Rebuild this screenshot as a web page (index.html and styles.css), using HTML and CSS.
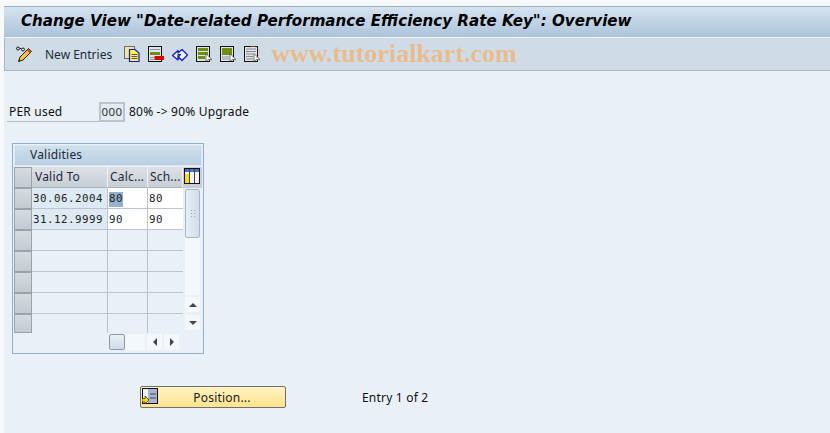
FILE: index.html
```html
<!DOCTYPE html>
<html lang="en">
<head>
  <meta charset="UTF-8" />
  <title>Change View</title>
  <link rel="stylesheet" href="styles.css">
</head>
<body>
  <div class="ventana">
    <!-- Titulo -->
    <h1 class="titulo">Change View "Date-related Performance Efficiency Rate Key": Overview</h1>

    <!-- Barra de herramientas -->
    <div class="toolbar">
      <svg class="icono" viewBox="0 0 16 16">
        <path d="M.5 2.500a1.500 1.500 0 1 1 3 0a1.500 1.500 0 1 1-3 0M3.500 2l2 1M5.500 3.500a1.500 1.500 0 1 1 3 0a1.500 1.500 0 1 1-3 0" fill="none" stroke="#222"/>
        <path d="M12.500 2.500l3 3L7 14l-4.500 1.500L4 11z" fill="#f6c33c" stroke="#222"/>
        <path d="M11.500 3.500l3 3" stroke="#d8432a" stroke-width="2"/>
        <path d="M2.500 15.500l.7-2 1.300 1.300z" fill="#111"/>
      </svg>
      <span class="toolbar-texto">New Entries</span>
      <div class="iconos">
        <svg class="icono" viewBox="0 0 16 16">
          <rect x=".5" y=".5" width="10" height="12" fill="#f1e6a0" stroke="#6b6b6b"/>
          <path d="M5.500 3.500h5.500l4 3.500v8.500H5.500z" fill="#ffee55" stroke="#1018c8" stroke-width="1.200"/>
          <path d="M7.500 8.500h6M7.500 10.500h6M7.500 12.500h6" stroke="#555"/>
        </svg>
        <svg class="icono" viewBox="0 0 16 16">
          <rect x=".5" y=".5" width="13" height="15" fill="#dfe5ea" stroke="#111"/>
          <path d="M2 3.500h10M2 11.500h4M2 13.500h4" stroke="#8896a4"/>
          <rect x="2" y="6" width="10" height="3" fill="#6f8f10"/>
          <rect x="6.500" y="10" width="9.500" height="4" fill="#e00000"/>
        </svg>
        <svg class="icono" viewBox="0 0 16 16">
          <path d="M.5 9.500L6 4.500v2.500l4-3.500 5.500 5.500-5.500 5.500-3.500-3.500L8.500 8.500 6 8.500v5.500z" fill="#eef3fb" stroke="#1018c8" stroke-width="1.200" stroke-linejoin="round"/>
        </svg>
        <svg class="icono" viewBox="0 0 16 16">
          <rect x=".5" y=".5" width="13" height="15" fill="#dfe5ea" stroke="#111"/>
          <path d="M2 2h10v3H2zM2 6h10v3H2zM2 10h7v3H2z" fill="#6f8f10"/>
          <path d="M10 7.500v8l2.200-1.800 3.800 0z" fill="#fff" stroke="#222" stroke-width=".6"/>
        </svg>
        <svg class="icono" viewBox="0 0 16 16">
          <rect x=".5" y=".5" width="13" height="15" fill="#dfe5ea" stroke="#111"/>
          <rect x="2" y="2" width="10" height="7" fill="#6f8f10"/>
          <path d="M2 11h7M2 13h7" stroke="#8896a4"/>
          <path d="M10 7.500v8l2.200-1.800 3.800 0z" fill="#fff" stroke="#222" stroke-width=".6"/>
        </svg>
        <svg class="icono" viewBox="0 0 16 16">
          <rect x=".5" y=".5" width="13" height="15" fill="#dfe5ea" stroke="#111"/>
          <path d="M2 3h10M2 5.500h10M2 8h7M2 10.500h7M2 13h7" stroke="#7d8a96" stroke-width="1.200"/>
          <path d="M10 7.500v8l2.200-1.800 3.800 0z" fill="#fff" stroke="#222" stroke-width=".6"/>
          <circle cx="9.500" cy="6.500" r="6" fill="none" stroke="#e9a868" stroke-dasharray="1.500 1" opacity=".7"/>
        </svg>
      </div>
      <span class="marca">www.tutorialkart.com</span>
    </div>

    <div class="contenido">
      <!-- Campo PER -->
      <div class="fila-per">
        <label class="per-label">PER used</label>
        <span class="per-valor">000</span>
        <span class="per-texto">80% -&gt; 90% Upgrade</span>
      </div>

      <!-- Tabla -->
      <div class="tabla">
        <div class="tabla-titulo">Validities</div>
        <div class="tabla-cuerpo">
          <div class="rejilla">
            <div class="cab-sel"></div>
            <div class="cab">Valid To</div>
            <div class="cab cab-corta">Calc...</div>
            <div class="cab cab-corta">Sch...</div>

            <div class="sel"></div>
            <div class="celda clave">30.06.2004</div>
            <div class="celda editable"><span class="marcado">80</span></div>
            <div class="celda editable">80</div>

            <div class="sel"></div>
            <div class="celda clave">31.12.9999</div>
            <div class="celda editable">90</div>
            <div class="celda editable">90</div>

            <div class="sel"></div><div class="celda"></div><div class="celda"></div><div class="celda"></div>
            <div class="sel"></div><div class="celda"></div><div class="celda"></div><div class="celda"></div>
            <div class="sel"></div><div class="celda"></div><div class="celda"></div><div class="celda"></div>
            <div class="sel"></div><div class="celda"></div><div class="celda"></div><div class="celda"></div>
            <div class="sel ultima"></div><div class="celda ultima"></div><div class="celda ultima"></div><div class="celda ultima"></div>
          </div>

          <!-- Scroll vertical -->
          <div class="scroll-v">
            <div class="config">
              <svg viewBox="0 0 16 16" width="16" height="16">
                <rect x=".5" y=".5" width="15" height="15" fill="#f4f6fa" stroke="#111"/>
                <rect x="1" y="1" width="14" height="3" fill="#4a70b8"/>
                <rect x="1" y="6" width="4" height="9" fill="#ffe000"/>
                <path d="M5.500 1v14M10.500 1v14" stroke="#444"/>
              </svg>
            </div>
            <div class="pista-v">
              <div class="pulgar-v"><span class="agarre"></span></div>
            </div>
            <div class="boton-v"><span class="flecha-arriba"></span></div>
            <div class="boton-v abajo"><span class="flecha-abajo"></span></div>
          </div>
        </div>

        <!-- Scroll horizontal -->
        <div class="scroll-h">
          <div class="pista-h"><div class="pulgar-h"></div></div>
          <div class="boton-h"><span class="flecha-izq"></span></div>
          <div class="boton-h"><span class="flecha-der"></span></div>
        </div>
      </div>

      <!-- Boton posicion -->
      <div class="pie">
        <button type="button" class="btn-posicion">
          <svg class="btn-icono" viewBox="0 0 16 16">
            <rect x=".5" y=".5" width="15" height="15" fill="#aab4d0" stroke="#111"/>
            <rect x="1" y="1" width="5" height="14" fill="#eef1f6"/>
            <path d="M8 6h6M8 10h6" stroke="#445"/>
            <path d="M0 10.500h3V8l4 4-4 4v-2H0z" fill="#ffd800" stroke="#222" stroke-width=".7"/>
          </svg>
          Position...
        </button>
        <span class="entrada">Entry 1 of 2</span>
      </div>
    </div>
  </div>
</body>
</html>
```

FILE: styles.css
```css
/* Reset y base */
* { box-sizing: border-box; margin: 0; padding: 0; }
html, body { height: 100%; }
body {
  font-family: "Noto Sans", sans-serif;
  font-size: 12px;
  letter-spacing: .2px;
  color: #111;
  background: #f7f9fc;
  overflow: hidden;
}
.ventana {
  height: 100%;
  padding: 6px 0 0 4px;
  display: flex;
  flex-direction: column;
}

/* Titulo */
.titulo {
  height: 31px;
  padding: 5px 0 0 17px;
  font-family: "DejaVu Sans", sans-serif;
  font-size: 15.100px;
  letter-spacing: 0;
  line-height: 19px;
  font-weight: bold;
  font-style: italic;
  white-space: nowrap;
  color: #000;
  border-top: 1px solid #9fb0c4;
  background: linear-gradient(#d4e3f0, #acc3da);
}

/* Barra de herramientas */
.toolbar {
  height: 34px;
  display: flex;
  align-items: center;
  padding-left: 11px;
  border-top: 1px solid #eef3f8;
  border-bottom: 1px solid #a5b6c6;
  border-left: 1px solid #a5b6c6;
  background: #cfdce6;
}
.icono { width: 16px; height: 16px; flex: none; }
.toolbar-texto { margin-left: 13px; color: #1c2a3a; letter-spacing: 0; white-space: nowrap; }
.iconos { display: flex; gap: 8px; margin-left: 12px; }
.marca {
  margin-left: 11px;
  font-family: "Liberation Serif", serif;
  font-size: 26px;
  font-weight: bold;
  letter-spacing: 0;
  color: #e9bc8e;
  white-space: nowrap;
}

/* Contenido */
.contenido {
  flex: 1;
  padding-top: 31px;
  background: #e9f0f7;
}
.fila-per {
  display: flex;
  align-items: flex-end;
  height: 20px;
  padding-left: 3px;
}
.per-label {
  width: 92px;
  height: 19px;
  line-height: 16px;
  padding: 1px 0 0 2px;
  border-bottom: 1px solid #b5bcc4;
  white-space: nowrap;
}
.per-valor {
  width: 26px;
  height: 20px;
  line-height: 16px;
  text-align: center;
  font-size: 11.500px;
  letter-spacing: .5px;
  color: #333;
  border: 2px solid #bcc3cb;
  background: #e4ebf2;
}
.per-texto { margin-left: 4px; height: 18px; line-height: 16px; white-space: nowrap; }

/* Tabla */
.tabla {
  width: 192px;
  height: 211px;
  margin: 21px 0 0 8px;
  padding: 1px;
  border: 1px solid #8fb0cc;
  background: #e9f0f7;
}
.tabla-titulo {
  height: 21px;
  margin-bottom: 1px;
  padding-left: 15px;
  line-height: 18px;
  border: 1px solid #dbe6ef;
  background: linear-gradient(#cfdfec, #b9cfe1);
  color: #1c2a3a;
}
.tabla-cuerpo { display: flex; height: 165px; }

/* Rejilla de filas */
.rejilla {
  width: 169px;
  display: grid;
  grid-template-columns: 18px 76px 40px 35px;
  grid-template-rows: 21px repeat(6, 21px) 19px;
}
.cab-sel, .sel {
  border: 1px solid #9aa3ad;
  background: linear-gradient(#d6dbe0, #c4cad2);
}
.sel.ultima { height: 19px; }
.cab {
  padding-left: 3px;
  line-height: 20px;
  border-right: 1px solid #eef2f6;
  border-bottom: 1px solid #a9b4c0;
  background: linear-gradient(#dde1e6, #c8ced6);
  color: #1c2a3a;
  white-space: nowrap;
  overflow: hidden;
}
.cab-corta { padding-left: 2px; }
.celda {
  padding: 4px 0 0 1px;
  font-family: "DejaVu Sans Mono", monospace;
  font-size: 10.800px;
  letter-spacing: .5px;
  line-height: 14px;
  color: #222;
  border-right: 1px solid #bcc5cf;
  border-bottom: 1px solid #bcc5cf;
}
.celda.ultima { border-bottom: 0; }
.celda:nth-child(4n) { border-right: 0; }
.clave { background: #dde9f3; }
.editable { background: #fff; }
.marcado { display: inline-block; background: #96b1cf; height: 15px; }

/* Scroll vertical */
.scroll-v {
  width: 19px;
  display: flex;
  flex-direction: column;
  align-items: center;
}
.config {
  width: 19px;
  height: 21px;
  padding: 1px;
  background: #c8ced6;
}
.pista-v {
  width: 15px;
  height: 106px;
  margin-top: 1px;
  background: #f5f8fb;
}
.pulgar-v {
  width: 15px;
  height: 49px;
  display: flex;
  align-items: center;
  justify-content: center;
  border: 1px solid #a7b7c6;
  border-radius: 2px;
  background: linear-gradient(90deg, #e8eff6, #cfdde9);
}
.agarre {
  width: 6px;
  height: 9px;
  background: radial-gradient(circle, #98a6b3 1px, transparent 1px) 0 0 / 3px 3px;
}
.boton-v {
  width: 15px;
  height: 15px;
  margin-top: 2px;
  display: flex;
  align-items: center;
  justify-content: center;
  background: #f5f8fb;
}
.boton-v.abajo { margin-top: 3px; }
.flecha-arriba { border: 4px solid transparent; border-top: 0; border-bottom: 4px solid #3c4650; }
.flecha-abajo { border: 4px solid transparent; border-bottom: 0; border-top: 4px solid #3c4650; }

/* Scroll horizontal */
.scroll-h {
  display: flex;
  align-items: center;
  gap: 2px;
  height: 18px;
  margin: 1px 0 0 95px;
}
.pista-h { width: 36px; height: 16px; background: #f5f8fb; }
.pulgar-h {
  width: 16px;
  height: 16px;
  border: 1px solid #8f9aa6;
  border-radius: 2px;
  background: linear-gradient(#e8eff6, #cfdde9);
}
.boton-h {
  width: 15px;
  height: 16px;
  display: flex;
  align-items: center;
  justify-content: center;
  background: #f5f8fb;
}
.flecha-izq { border: 4px solid transparent; border-left: 0; border-right: 4px solid #3c4650; }
.flecha-der { border: 4px solid transparent; border-right: 0; border-left: 4px solid #3c4650; }

/* Boton y pie */
.pie {
  display: flex;
  align-items: center;
  margin: 32px 0 0 136px;
}
.btn-posicion {
  position: relative;
  width: 146px;
  height: 22px;
  padding-left: 18px;
  font-family: inherit;
  font-size: 12px;
  letter-spacing: .2px;
  color: #1a1a1a;
  border: 1px solid #6f6f6f;
  border-radius: 2px;
  background: linear-gradient(#fff3c4, #ffe48c);
}
.btn-icono { position: absolute; left: 1px; top: 1px; width: 16px; height: 16px; }
.entrada { margin-left: 76px; white-space: nowrap; }
```
